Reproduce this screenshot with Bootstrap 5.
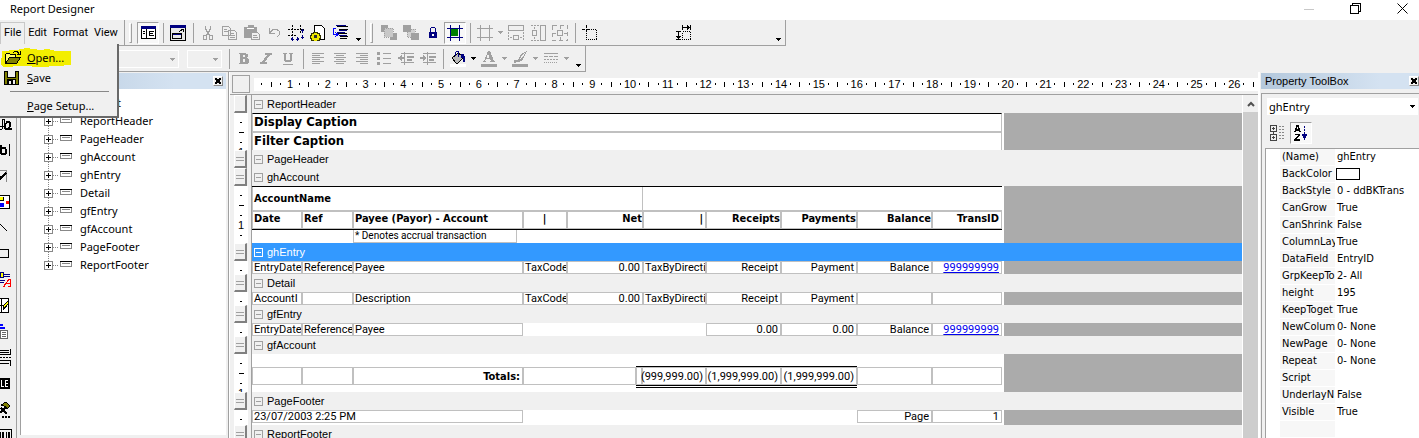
<!DOCTYPE html>
<html lang="en">
<head>
<meta charset="utf-8">
<meta name="viewport" content="width=device-width, initial-scale=1">
<title>Report Designer</title>
<link href="https://cdn.jsdelivr.net/npm/bootstrap@5.3.0/dist/css/bootstrap.min.css" rel="stylesheet">
<style>
  :root { --face:#f0f0f0; --line:#a0a0a0; --cell:#c0c0c0; }
  body { background:var(--face); color:#000; font:11px/16px "Noto Sans","Open Sans",sans-serif; overflow:hidden; }
  svg { display:block; flex:none; shape-rendering:crispEdges; }
  button { border:0; background:none; padding:0; color:inherit; }
  .titlebar { background:#fff; height:20px; padding:0 11px 2px 10px; }
  .winbtns { gap:36px; }
  .band { height:26px; padding-top:1px; border-right:1px solid var(--line); border-bottom:1px solid var(--line); }
  .menus { width:125px; font-family:Roboto,sans-serif; }
  .menus button { height:22px; padding:0 3px; }
  .menus .opened { border:1px solid #c8c8c8; border-bottom:0; }
  .grip { width:3px; height:20px; border:1px solid var(--line); border-left-color:#fff; border-top-color:#fff; margin:0 5px 0 4px; }
  .tool { width:22px; height:22px; display:flex; align-items:center; justify-content:center; flex:none; }
  .pressed { background:#f8f8f8; border:1px solid; border-color:var(--line) #fff #fff var(--line); }
  .apart { margin:0 76px 0 72px; }
  .split { width:8px; height:20px; background:linear-gradient(var(--line),var(--line)) 4px 0/1px 100% no-repeat; flex:none; }
  .caret { width:9px; height:22px; display:flex; align-items:center; justify-content:center; flex:none; }
  .low { align-items:flex-end; padding-bottom:3px; width:14px; }
  .tbselect { height:18px; border:1px solid #fff; background:transparent; appearance:none; border-radius:0; }
  .combo { position:relative; }
  .combo svg { position:absolute; right:4px; top:50%; margin-top:-1px; pointer-events:none; }
  .filemenu { position:absolute; left:0; top:44px; width:119px; height:74px; z-index:5; background:var(--face);
    border:solid #696969; border-width:0 2px 2px 0; padding-top:4px; }
  .filemenu button { display:flex; align-items:center; width:100%; height:20px; padding-left:4px; text-align:left; }
  .filemenu .ico { width:23px; }
  .marker { position:relative; }
  .marker .ink { position:absolute; left:1px; top:0; z-index:-1; }
  .filemenu hr { margin:3px 8px 4px 10px; border-color:#888; opacity:1; }
  .toolbox { width:17px; border-right:1px solid var(--line); padding-top:39px; overflow:hidden; }
  .toolbox button { width:12px; height:26px; display:flex; align-items:center; flex:none; }
  .dock { width:209px; margin-left:3px; border-right:1px solid var(--line); padding-right:2px; }
  .dockhead { height:16px; margin-top:1px; background:linear-gradient(90deg,#b4c8dc,#d4e2f1 75%); font:11px/16px "Liberation Sans",sans-serif; }
  .xbtn { width:10px; height:10px; margin:3px; background:var(--face); border:1px solid; border-color:#fff #888 #888 #fff; display:flex; align-items:center; justify-content:center; }
  .tree { background:#fff; border-left:1px solid var(--line); margin-bottom:3px; padding:5px 0 0 23px; flex:1; }
  .tree ul { list-style:none; margin:0; padding:0; }
  .node { display:flex; align-items:center; height:18px; }
  .node svg { margin-right:6px; }
  .surface { border-left:1px solid #fff; min-width:0; }
  .rulerrow { height:24px; border-bottom:1px solid var(--line); padding-top:3px; }
  .corner { width:18px; height:18px; border:1px solid var(--line); margin:0 4px 0 2px; flex:none; }
  .ruler { background:#fff; height:13px; margin-top:3px; padding-left:3px; display:grid; grid-template-columns:repeat(26,4fr) 2fr; font:11px/13px "Liberation Sans",sans-serif; }
  .unit { display:grid; grid-template-columns:repeat(4,1fr); place-items:center; min-width:0; }
  .unit.tail { grid-template-columns:repeat(2,1fr); }
  .unit span { width:0; display:flex; justify-content:center; }
  .dot { width:1px; height:2px; background:#000; }
  .bar { width:1px; height:5px; background:#000; }
  .row-s { display:flex; }
  .vr-s { width:22px; flex:none; padding-left:4px; border-right:1px solid var(--line); }
  .vruler { width:14px; height:100%; background:#fff; overflow:hidden; position:relative; font:11px/10px "Liberation Sans",sans-serif; }
  .vticks { position:absolute; inset:4px 0 auto 0; }
  .vticks i { display:flex; height:10px; align-items:center; justify-content:center; font-style:normal; }
  .vticks i::before { content:""; width:2px; height:1px; background:#000; }
  .vticks i:nth-child(4n+2)::before { width:5px; }
  .vticks i:nth-child(4n)::before { content:"1"; width:auto; height:auto; background:none; }
  .handle { width:13px; height:18px; border:solid; border-width:1px 2px 2px 1px; border-color:#fff #808080 #808080 #fff; background:var(--face); padding-top:6px; }
  .handle::before { content:""; display:block; margin:0 1px; height:4px; border:solid var(--line); border-width:1px 0; }
  .handle.first::before { display:none; }
  .caption-s { height:18px; flex:1; display:flex; align-items:center; gap:4px; padding-left:2px; font:11px/16px "Liberation Sans",sans-serif; }
  .sel { background:#3399ff; color:#fff; }
  .paper { width:752px; background:#fff; flex:none; font:11px/13px Roboto,sans-serif; }
  .void { background:#ababab; flex:1; }
  .cells { display:grid; width:750px; grid-template-columns:50px 51px 170px 44px 76px 63px 75px 76px 75px 70px; }
  .cells > * { border:1px solid var(--cell); padding:0 2px 0 1px; white-space:nowrap; overflow:hidden; min-width:0; line-height:12px; }
  .cells .none { border:0; }
  .line1 > * { height:13px; }
  .cells a { color:#0000ee; }
  .end { text-align:right; }
  .totals { grid-template-columns:50px 51px 170px 113px 6px 64px 75px 76px 75px 70px; }
  .totals > * { height:18px; line-height:17px; overflow:visible; }
  .totals .sum { position:relative; padding-left:0; }
  .sum::before { content:""; position:absolute; inset:-2px -1px auto; border-top:1px solid #000; }
  .sum::after { content:""; position:absolute; inset:auto -1px -4px; height:3px; border:solid #000; border-width:1px 0; }
  .strong-s, .big, .heads { font-family:"DejaVu Sans Condensed","DejaVu Sans",sans-serif; font-weight:700; }
  .big { width:750px; height:18px; border:solid var(--cell); border-width:0 1px 1px; font-size:13px; line-height:16px; padding-left:1px; }
  .heads > * { height:18px; line-height:14px; }
  .vscroll { width:16px; background:#cdcdcd; border-left:1px solid #fff; flex:none; }
  .vscroll button { width:100%; height:17px; background:var(--face); display:flex; align-items:center; justify-content:center; }
  .props { width:161px; flex:none; border-left:2px solid #fff; padding-left:1px; overflow:hidden; }
  .propbody { border:solid var(--line); border-width:1px 0 0 1px; margin-top:4px; padding:4px 0 0 3px; flex:1; }
  .objsel { width:151px; height:17px; border:0; background:#fff; appearance:none; padding:0 2px; margin-left:2px; line-height:17px; color:#000; border-radius:0; }
  .proptools { padding:7px 4px 4px; }
  .grid-s { background:#fff; border:solid var(--line); border-width:1px 0 0 1px; padding-left:14px; flex:1; overflow:hidden; }
  .grid-s table { border-collapse:collapse; table-layout:fixed; width:140px; font:11px/16px "DejaVu Sans Condensed","DejaVu Sans",sans-serif; }
  .grid-s th { font-weight:400; width:55px; background:#f7f7f7; padding:0 0 0 2px; height:17px; border-bottom:1px solid #fff; overflow:hidden; white-space:nowrap; }
  .grid-s td { padding:0 0 0 2px; white-space:nowrap; overflow:hidden; }
  .swatch { display:block; width:24px; height:12px; border:1px solid #000; margin-left:-1px; }
</style>
</head>
<body class="vh-100 d-flex flex-column">
<header class="titlebar d-flex align-items-center justify-content-between">
  <span>Report Designer</span>
  <div class="winbtns d-flex align-items-center">
    <button aria-label="Minimize"><svg width="10" height="10"><path d="M0 5.500h10" stroke="#c8c8c8"/></svg></button>
    <button aria-label="Restore"><svg width="11" height="11"><path d="M.5 2.500h8v8h-8zM2.500 2V.5h8v8H9" fill="none" stroke="#000"/></svg></button>
    <button aria-label="Close"><svg width="11" height="11" style="shape-rendering:auto"><path d="M.5.5l10 10M10.500.5l-10 10" stroke="#000"/></svg></button>
  </div>
</header>

<div class="d-flex">
  <nav class="band menus d-flex align-items-center">
    <button class="opened">File</button><button>Edit</button><button>Format</button><button>View</button>
  </nav>
  <div class="band d-flex align-items-center">
    <span class="grip"></span>
    <button class="tool pressed" aria-label="Explorer"><svg width="15" height="13"><path d="M.5.5h14v12H.5z" fill="#fff" stroke="#000"/><path d="M0 0h15v3H0z" fill="#000080"/><path d="M5.500 3v9M2 5.500h2M2 7.500h2M8 5.500h5M8 7.500h4M8 9.500h5M8.500 5v5" stroke="#000"/></svg></button>
    <span class="split"></span>
    <button class="tool" aria-label="Property box"><svg width="16" height="16"><path d="M.5.5h15v15H.5z" fill="#e8e8e8" stroke="#000"/><path d="M0 0h16v3H0zM2 8h10v2H2z" fill="#000080"/><path d="M2.500 8.500h9v5h-9z" fill="none" stroke="#000"/><path d="M9 7l4-3M11 4.500h3M13.500 4v3" stroke="#000"/></svg></button>
    <span class="split"></span>
    <button class="tool" aria-label="Cut"><svg width="12" height="16"><path d="M3.500 1v3l4 6M8.500 1v3l-4 6" fill="none" stroke="#a0a0a0" stroke-width="1.500"/><path d="M1.500 10.500h3v4h-3zM7.500 10.500h3v4h-3z" fill="none" stroke="#a0a0a0"/></svg></button>
    <button class="tool" aria-label="Copy"><svg width="16" height="14"><path d="M.5.5h6l2 2v7h-8zM6.500 4.500h6l2 2v7h-8z" fill="#f0f0f0" stroke="#a0a0a0"/><path d="M2 3.500h3M2 5.500h4M8 7.500h4M8 9.500h5M8 11.500h5" stroke="#a0a0a0"/></svg></button>
    <button class="tool" aria-label="Paste"><svg width="16" height="15"><path d="M0 2h4V0h6v2h3v11H0z" fill="#a0a0a0"/><path d="M3 3.500h7" stroke="#fff"/><path d="M7.500 7.500h6l2 2v5h-8z" fill="#f0f0f0" stroke="#a0a0a0"/><path d="M9 10.500h4M9 12.500h5" stroke="#a0a0a0"/></svg></button>
    <button class="tool" aria-label="Undo"><svg width="13" height="11"><path d="M1.500 1v5h5M2 5.500l3-3h4l2.500 2v3L9 10" fill="none" stroke="#a0a0a0"/></svg></button>
    <button class="tool" aria-label="Grid"><svg width="16" height="16"><path d="M4.500 0v11M12.500 0v8M0 4.500h16M0 10.500h8" stroke="#000" stroke-dasharray="2 1"/><path d="M3 14h8M14 5v8" stroke="#000080" stroke-dasharray="3 2"/><path d="M5 12v4h-1l-2-2 2-2zM9 12l2 2-2 2zM12 6h4l-2-2zM12 12h4l-2 2z" fill="#000080"/></svg></button>
    <button class="tool" aria-label="Page settings"><svg width="16" height="16"><path d="M4.500.5h7l3 3v11h-10z" fill="#fff" stroke="#000"/><path d="M14 3h1v12h-7v-1h6z" fill="#000"/><path d="M3 7h4v1h2v2h1v3H9v2H7v1H3v-1H1v-2H0v-3h1V8h2z" fill="#f0e800" stroke="#333300"/><path d="M4 10h3v3H4z" fill="#333"/></svg></button>
    <button class="tool" aria-label="Script order"><svg width="16" height="15"><path d="M4.500 1.500h11M6.500 4.500h9M4.500 8.500h10M7.500 11.500h8M7.500 13.500h7" stroke="#000"/><path d="M4 .5h10M7 5.500h8M5 7.500h8M7 10.500h8" stroke="#000080"/><path d="M4 3.500H1.500v6H5M3 7l3 2.500L3 12" fill="none" stroke="#0000ff"/></svg></button>
    <button class="caret low" aria-label="More"><svg width="5" height="3"><path d="M0 0h5v1H4v1H3v1H2V2H1V1H0z"/></svg></button>
  </div>
  <div class="band d-flex align-items-center">
    <span class="grip"></span>
    <button class="tool" aria-label="Bring to front"><svg width="16" height="15"><path d="M0 0h7v7H0zM9 8h7v7H9z" fill="#a0a0a0"/><path d="M3 3h9v9H3z" fill="#c8c8c8" stroke="#a0a0a0" stroke-dasharray="1 1"/></svg></button>
    <button class="tool" aria-label="Send to back"><svg width="16" height="15"><path d="M4 4h8v8H4z" fill="#d0d0d0" stroke="#a0a0a0" stroke-dasharray="1 1"/><path d="M0 0h8v7H0zM8 8h8v7H8z" fill="#a0a0a0"/></svg></button>
    <button class="tool" aria-label="Lock"><svg width="8" height="11"><path d="M1.500 5V2l1-1.500h3l1 1.500v3" fill="none" stroke="#000080"/><path d="M0 5h8v6H0z" fill="#000080"/><path d="M3 7h2v2H3z" fill="#fff"/></svg></button>
    <button class="tool pressed" aria-label="Snap to grid"><svg width="16" height="16"><path d="M4 4h7v7H4z" fill="#008000"/><path d="M3.500 0v16M12.500 0v16M0 3.500h16M0 12.500h16" stroke="#000080"/></svg></button>
    <span class="split"></span>
    <button class="tool" aria-label="Grid size"><svg width="16" height="16"><path d="M3.500 0v16M12.500 0v16M0 3.500h16M0 12.500h16" stroke="#a0a0a0"/></svg></button>
    <button class="caret" aria-label="Grid size options"><svg width="5" height="3"><path d="M0 0h5v1H4v1H3v1H2V2H1V1H0z" fill="#a0a0a0"/></svg></button>
    <button class="tool" aria-label="Same width"><svg width="16" height="16"><path d="M.5.5h15v5H.5zM5.500 10.500h5v4h-5z" fill="none" stroke="#a0a0a0"/><path d="M.5 7v8M15.500 7v8M2 12.500h2M12 12.500h2" stroke="#a0a0a0" stroke-dasharray="2 1"/></svg></button>
    <button class="tool" aria-label="Same height"><svg width="15" height="16"><path d="M9.500.5h5v15h-5zM1.500 5.500h4v5h-4z" fill="none" stroke="#a0a0a0"/><path d="M0 .5h8M0 15.500h8M3.500 2v2M3.500 12v2" stroke="#a0a0a0" stroke-dasharray="2 1"/></svg></button>
    <button class="tool" aria-label="Same size"><svg width="16" height="16"><path d="M5.500 5.500h5v5h-5z" fill="none" stroke="#a0a0a0"/><path d="M.5.5h15v15H.5z" fill="none" stroke="#a0a0a0" stroke-dasharray="4 3"/><path d="M8.500 1v3M8.500 12v3M1 8.500h3M12 8.500h3" stroke="#a0a0a0"/></svg></button>
    <span class="split"></span>
    <button class="tool" aria-label="Place control"><svg width="16" height="16"><path d="M4.500 0v8M0 4.500h8" stroke="#000" stroke-dasharray="3 1"/><path d="M4.500 4.500h10v10h-10z" fill="none" stroke="#000" stroke-dasharray="1 1"/></svg></button>
    <button class="tool apart" aria-label="Resize control"><svg width="16" height="16"><path d="M6.500 6.500h8v8h-8z" fill="none" stroke="#000" stroke-dasharray="1 1"/><path d="M6.500 0v5M14.500 0v5M7 2.500h7M11 .5l2 2-2 2M0 6.500h5M0 14.500h5M2.500 7v7M.5 11l2 2 2-2" fill="none" stroke="#000"/></svg></button>
    <button class="caret low" aria-label="More"><svg width="5" height="3"><path d="M0 0h5v1H4v1H3v1H2V2H1V1H0z"/></svg></button>
  </div>
</div>

<div class="d-flex">
  <div class="band d-flex align-items-center">
    <span class="combo"><select class="tbselect" style="width:179px" aria-label="Font" disabled></select><svg width="6" height="3"><path d="M0 0h6L3 3z" fill="#a0a0a0"/></svg></span>
    <span class="combo ms-2"><select class="tbselect" style="width:35px" aria-label="Size" disabled></select><svg width="6" height="3"><path d="M0 0h6L3 3z" fill="#a0a0a0"/></svg></span>
    <span class="split" style="margin-left:3px"></span>
    <button class="tool" aria-label="Bold"><svg width="10" height="11"><path d="M0 0h7v1h2v3H8v1h1v1h1v4H9v1H0v-1h1V1H0zM4 2v2h2V2zM4 6v3h2V6z" fill="#a0a0a0" fill-rule="evenodd"/></svg></button>
    <button class="tool" aria-label="Italic"><svg width="12" height="11"><path d="M5 0h7v2h-2L5 9h2v2H0V9h2l5-7H5z" fill="#a0a0a0"/></svg></button>
    <button class="tool" aria-label="Underline"><svg width="10" height="12"><path d="M0 0h4v1H3v6h4V1H6V0h4v1H9v7H8v1H2V8H1V1H0zM0 11h10v1H0z" fill="#a0a0a0"/></svg></button>
    <span class="split"></span>
    <button class="tool" aria-label="Align left"><svg width="12" height="12"><path d="M0 .5h12M0 2.500h8M0 4.500h12M0 6.500h8M0 8.500h12M0 10.500h8" stroke="#a0a0a0"/></svg></button>
    <button class="tool" aria-label="Align center"><svg width="12" height="12"><path d="M0 .5h12M2 2.500h8M0 4.500h12M2 6.500h8M0 8.500h12M2 10.500h8" stroke="#a0a0a0"/></svg></button>
    <button class="tool" aria-label="Align right"><svg width="12" height="12"><path d="M0 .5h12M4 2.500h8M0 4.500h12M4 6.500h8M0 8.500h12M4 10.500h8" stroke="#a0a0a0"/></svg></button>
    <button class="tool" aria-label="Bullets"><svg width="14" height="13"><path d="M0 0h3v3H0zM0 5h3v3H0zM0 10h3v3H0zM6 1h8v1H6zM6 6h8v1H6zM6 11h8v1H6z" fill="#a0a0a0"/></svg></button>
    <button class="tool" aria-label="Outdent"><svg width="16" height="13"><path d="M3 1h13v1H3zM9 4h7v2H9zM9 7h5v2H9zM3 10h13v1H3zM6 0h1v13H6zM0 5h6v2H0zM2 4h1v4H2zM3 3h1v6H3z" fill="#a0a0a0"/></svg></button>
    <button class="tool" aria-label="Indent"><svg width="16" height="13"><path d="M3 1h13v1H3zM9 4h7v2H9zM9 7h5v2H9zM3 10h13v1H3zM7 0h1v13H7zM0 5h6v2H0zM4 4h1v4H4zM3 3h1v6H3z" fill="#a0a0a0"/></svg></button>
    <span class="split"></span>
    <button class="tool" aria-label="Fill color"><svg width="16" height="16"><path d="M0 13h16v3H0z" fill="#fff"/><path d="M2 7l6-5 6 4-6 6H6z" fill="#b8b8b8" stroke="#000"/><path d="M5.500 5V1.500l1-1h2V6" fill="none" stroke="#000080"/><path d="M11 3h3v2h1v6h-2V7h-2z" fill="#000080"/></svg></button>
    <button class="caret" aria-label="Fill options"><svg width="5" height="3"><path d="M0 0h5v1H4v1H3v1H2V2H1V1H0z"/></svg></button>
    <button class="tool" aria-label="Text color"><svg width="16" height="16"><path d="M0 13h16v3H0z" fill="#a0a0a0"/><path d="M7 0h2l4 10h1v1H9v-1h1L9 8H5l-1 2h1v1H2v-1h1zM7 3L5.500 7h3z" fill="#a0a0a0" fill-rule="evenodd"/></svg></button>
    <button class="caret" aria-label="Text color options"><svg width="5" height="3"><path d="M0 0h5v1H4v1H3v1H2V2H1V1H0z" fill="#a0a0a0"/></svg></button>
    <button class="tool" aria-label="Line color"><svg width="16" height="16"><path d="M0 13h16v3H0zM15 0l-5 10-5 1-3 1v-3h4l3-6z" fill="#a0a0a0"/><path d="M8 8l5-6" stroke="#f0f0f0"/></svg></button>
    <button class="caret" aria-label="Line color options"><svg width="5" height="3"><path d="M0 0h5v1H4v1H3v1H2V2H1V1H0z" fill="#a0a0a0"/></svg></button>
    <button class="tool" aria-label="Line style"><svg width="14" height="12"><path d="M0 .5h14" stroke="#a0a0a0"/><path d="M0 3.500h14" stroke="#a0a0a0" stroke-dasharray="4 1"/><path d="M0 6.500h14" stroke="#a0a0a0" stroke-dasharray="2 1"/><path d="M0 9.500h14" stroke="#a0a0a0" stroke-dasharray="1 1"/></svg></button>
    <button class="caret" aria-label="Line style options"><svg width="5" height="3"><path d="M0 0h5v1H4v1H3v1H2V2H1V1H0z" fill="#a0a0a0"/></svg></button>
    <button class="caret low" aria-label="More"><svg width="5" height="3"><path d="M0 0h5v1H4v1H3v1H2V2H1V1H0z"/></svg></button>
  </div>
</div>

<div class="filemenu">
  <div class="marker">
    <svg class="ink" width="72" height="20"><path d="M1 3l14-1 10-2 14 2 8-1 8 2h15v14l-15 1-14 1-20-1-19 1-2-2z" fill="#f3ee00"/></svg>
    <button><span class="ico"><svg width="17" height="14"><path d="M1.500 12.500v-9l1-1h3l1 1h5v3" fill="#ffff66" stroke="#000"/><path d="M1.500 12.500l4-6h11l-4 6z" fill="#808000" stroke="#000"/><path d="M9 2l2-1.500h2l2 2M13 3h3V0" fill="none" stroke="#000"/></svg></span><span><u>O</u>pen...</span></button>
  </div>
  <button><span class="ico"><svg width="15" height="14"><path d="M0 0h15v14H0z"/><path d="M1 1h2v12H1zM12 1h2v12h-2zM3 7h9v1H3z" fill="#808000"/><path d="M4 0h7v6H4z" fill="#f0f0f0"/><path d="M5 10h2v3H5zM9 9h2v4H9z" fill="#f0f0f0"/></svg></span><span><u>S</u>ave</span></button>
  <hr>
  <button><span class="ico"></span><span><u>P</u>age Setup...</span></button>
</div>

<main class="d-flex flex-fill" style="min-height:0">
  <aside class="toolbox d-flex flex-column">
    <button aria-label="Label"><svg width="12" height="12"><path d="M0 8h4M0 11h2M2 11V1h2v10" stroke="#000" fill="none"/><path d="M10 4H7L5 7v3l1 1h2l2-3 .5-4L9 10l1 1h2" stroke="#000" stroke-width="1.500" fill="none"/></svg></button>
    <button aria-label="Text box"><svg width="12" height="12"><path d="M1 1v9M1 4h4l1 2v3l-1 1H1" stroke="#000" stroke-width="2" fill="none"/><path d="M9.500 0v12" stroke="#000"/></svg></button>
    <button aria-label="Check box"><svg width="8" height="12"><path d="M0 .5h7M6.500 0v12" stroke="#888"/><path d="M0 6v3l6-6" stroke="#000" stroke-width="2" fill="none"/></svg></button>
    <button aria-label="Image"><svg width="10" height="14"><path d="M-1 .5H9.500v13H-1" fill="#fff" stroke="#000"/><path d="M0 2h3v3H0z" fill="#ff0"/><path d="M0 5.500h3.500V2" fill="none" stroke="#000"/><path d="M0 8h4v4H0z" fill="#00f"/><path d="M6 6h3v3H6z" fill="#f00"/></svg></button>
    <button aria-label="Line"><svg width="8" height="9"><path d="M0 1l7 7" stroke="#000"/></svg></button>
    <button aria-label="Shape"><svg width="9" height="9"><path d="M-1 .5H8.500v8H-1" fill="none" stroke="#000"/></svg></button>
    <button aria-label="Rich text"><svg width="12" height="15"><path d="M0 0h3v5H0z" fill="#ff0" stroke="#000080"/><path d="M4 2.500h6M4 4.500h6M0 8.500h5M0 10.500h4" stroke="#000080"/><path d="M4 14L9 7h1v7M5 11.500h5M3 14h2M8 14h3" stroke="#f00" fill="none"/></svg></button>
    <button aria-label="Frame"><svg width="9" height="15"><path d="M-1 .5H8.500v14H-1M1.500 0v15M0 7.500h3" fill="#fff" stroke="#000"/><path d="M3 12l1-5 4-4v3z" fill="#ff0" stroke="#000"/></svg></button>
    <button aria-label="Subreport"><svg width="9" height="15"><path d="M0 0h3v2H0zM0 3h5v2H0z" fill="#00f"/><path d="M.5 6.500h7v8h-7z" fill="#fff" stroke="#666"/><path d="M2 8.500h4M2 10.500h4M2 12.500h4" stroke="#666"/></svg></button>
    <button aria-label="Page break"><svg width="11" height="17"><path d="M0 1.500h9M0 3.500h9M0 5.500h10.500V0M0 11.500h10.500v5M0 14.500h9" fill="none" stroke="#000"/><path d="M0 8.500h11" stroke="#000" stroke-dasharray="2 1"/></svg></button>
    <button aria-label="OLE object"><svg width="10" height="11"><path d="M0 0h10v11H0z"/><path d="M1.500 2v6.500H4M8 2.500H5.500v6H8M5.500 5.500H8" stroke="#fff" fill="none"/></svg></button>
    <button aria-label="ActiveX"><svg width="11" height="16"><path d="M1 3l5-3 4 4-3 3-3-3z" fill="#808000" stroke="#000"/><path d="M6 5l-6 6M1 6l6 6" stroke="#000" stroke-width="1.500"/><path d="M2 14.500h9" stroke="#000" stroke-width="2" stroke-dasharray="2 1"/></svg></button>
    <button aria-label="Bar code"><svg width="12" height="14"><path d="M0 .5h11.500V14M.5 3v11M3 3v11M6.500 3v11M9 3v11" fill="none" stroke="#000" stroke-width="1.500"/></svg></button>
  </aside>

  <aside class="dock d-flex flex-column">
    <div class="dockhead d-flex justify-content-end"><button class="xbtn" aria-label="Close explorer"><svg width="6" height="6"><path d="M0 0l6 6M6 0L0 6" stroke="#000" stroke-width="1.500"/></svg></button></div>
    <div class="tree">
      <ul id="tree"><li class="node"><svg width="14" height="18"><path d="M1 5h12v6H1z" fill="#888"/></svg><span>rptAccount</span></li></ul>
    </div>
  </aside>

  <section class="surface d-flex flex-column flex-fill">
    <div class="rulerrow d-flex"><span class="corner"></span><div class="ruler flex-fill" id="ruler"></div></div>
    <div class="d-flex flex-fill" style="min-height:0">
      <div class="flex-fill overflow-hidden" id="sections">
        <div class="row-s" data-cap="ReportHeader"></div>
        <div class="row-s" data-body>
          <div class="paper"><div class="big" style="height:19px;border-top:1px solid #000">Display Caption</div><div class="big" style="border-top:1px solid #c0c0c0;border-bottom:0">Filter Caption</div></div>
        </div>
        <div class="row-s" data-cap="PageHeader"></div>
        <div class="row-s" data-cap="ghAccount"></div>
        <div class="row-s" data-body>
          <div class="paper" style="height:57px">
            <div class="cells" style="grid-template-columns:391px 359px;border-top:1px solid #000"><b class="strong-s" style="height:24px;line-height:24px;border-top:0">AccountName</b><span class="none" style="border-bottom:1px solid #c0c0c0"></span></div>
            <div class="cells heads" style="border-bottom:1px solid #000"><span>Date</span><span>Ref</span><span>Payee (Payor) - Account</span><span class="text-center">|</span><span class="end px-0">Net</span><span class="end">|</span><span class="end px-0">Receipts</span><span class="end px-0">Payments</span><span class="end px-0">Balance</span><span class="end">TransID</span></div>
            <div class="cells" style="grid-template-columns:101px 164px"><span class="none"></span><span style="height:13px;font-size:10px;border-top:0">* Denotes accrual transaction</span></div>
          </div>
        </div>
        <div class="row-s" data-cap="ghEntry" data-sel></div>
        <div class="row-s" data-body><div class="paper"><div class="cells line1"><span>EntryDate</span><span>Reference</span><span>Payee</span><span>TaxCode</span><span class="end">0.00</span><span>TaxByDirecti</span><span class="end">Receipt</span><span class="end">Payment</span><span class="end">Balance</span><span class="end"><a href="#">999999999</a></span></div></div></div>
        <div class="row-s" data-cap="Detail"></div>
        <div class="row-s" data-body><div class="paper"><div class="cells line1"><span>AccountI</span><span></span><span>Description</span><span>TaxCode</span><span class="end">0.00</span><span>TaxByDirecti</span><span class="end">Receipt</span><span class="end">Payment</span><span></span><span></span></div></div></div>
        <div class="row-s" data-cap="gfEntry"></div>
        <div class="row-s" data-body><div class="paper"><div class="cells line1"><span>EntryDate</span><span>Reference</span><span>Payee</span><span class="none"></span><span class="none"></span><span class="none"></span><span class="end">0.00</span><span class="end">0.00</span><span class="end">Balance</span><span class="end"><a href="#">999999999</a></span></div></div></div>
        <div class="row-s" data-cap="gfAccount"></div>
        <div class="row-s" data-body><div class="paper" style="height:38px;padding-top:13px"><div class="cells totals"><span></span><span></span><b class="end strong-s">Totals:</b><span></span><span class="sum"></span><span class="sum end d-flex justify-content-end">(999,999.00)</span><span class="sum end">(1,999,999.00)</span><span class="sum end">(1,999,999.00)</span><span></span><span></span></div></div></div>
        <div class="row-s" data-cap="PageFooter"></div>
        <div class="row-s" data-body><div class="paper" style="height:15px"><div class="cells line1" style="grid-template-columns:271px 334px 75px 70px"><span>23/07/2003 2:25 PM</span><span class="none"></span><span class="end">Page</span><span class="end">1</span></div></div></div>
        <div class="row-s" data-cap="ReportFooter"></div>
      </div>
      <div class="vscroll"><button aria-label="Scroll up"><svg width="8" height="6" style="shape-rendering:auto"><path d="M1 5l3-3 3 3" fill="none" stroke="#505050" stroke-width="2"/></svg></button></div>
    </div>
  </section>

  <aside class="props d-flex flex-column">
    <div class="dockhead d-flex justify-content-between text-nowrap"><span class="ps-1">Property ToolBox</span><button class="xbtn me-0" aria-label="Close properties"><svg width="6" height="6"><path d="M0 0l6 6M6 0L0 6" stroke="#000" stroke-width="1.500"/></svg></button></div>
    <div class="propbody d-flex flex-column">
      <span class="combo d-block"><select class="objsel" aria-label="Object"><option>ghEntry</option></select><svg width="5" height="3"><path d="M0 0h5v1H4v1H3v1H2V2H1V1H0z"/></svg></span>
      <div class="proptools d-flex align-items-center gap-1">
        <button class="tool" style="width:17px" aria-label="Categorized"><svg width="15" height="16"><path d="M.5.5h6v6h-6zM.5 9.500h6v6h-6zM3.500 7v2M2 3.500h3M3.500 2v3M2 12.500h3M3.500 11v3" fill="none" stroke="#444"/><path d="M9 1.500h5M9 4.500h6M9 7.500h6M9 10.500h6M9 13.500h6" stroke="#888" stroke-dasharray="2 1"/></svg></button>
        <button class="tool pressed" aria-label="Alphabetic"><svg width="14" height="16"><path d="M1 7l2-6h1l2 6M2 5h4M1 9.500h4.500L1 15h5" fill="none" stroke="#000" stroke-width="1.500"/><path d="M10.500 1v9" stroke="#000080" stroke-dasharray="2 1"/><path d="M8 9h5v2h-1v2h-1v2h-1v-2H9v-2H8z" fill="#000080"/></svg></button>
      </div>
      <div class="grid-s"><table><tbody id="props"></tbody></table></div>
    </div>
  </aside>
</main>

<script src="https://cdn.jsdelivr.net/npm/bootstrap@5.3.0/dist/js/bootstrap.bundle.min.js"></script>
<script>
  // Report structure tree
  const names = ['ReportHeader','PageHeader','ghAccount','ghEntry','Detail','gfEntry','gfAccount','PageFooter','ReportFooter'];
  names.forEach((n, i) => tree.insertAdjacentHTML('beforeend',
    `<li class="node"><svg width="30" height="18"><path d="M4.500 0v${i < names.length - 1 ? 18 : 9}M9 9.500h6" stroke="#888" stroke-dasharray="1 1"/><path d="M.5 5.500h8v8h-8z" fill="#fff" stroke="#888"/><path d="M2 9.500h5M4.500 7v5" stroke="#000"/><path d="M16 5h12v6H16z" fill="#888"/><path d="M16 5.500h12" stroke="#000"/><path d="M17 6h10v4H17z" fill="#fff"/><path d="M18 7.500h8" stroke="#888"/></svg><span>${n}</span></li>`));

  // Horizontal ruler, one cell per centimetre
  let r = '';
  for (let i = 1; i <= 26; i++) r += `<div class="unit"><i class="dot"></i><i class="bar"></i><i class="dot"></i><span>${i}</span></div>`;
  document.getElementById('ruler').innerHTML = r + '<div class="unit tail"><i class="dot"></i><i class="bar"></i></div>';

  // Section captions and the vertical ruler beside each section
  document.querySelectorAll('[data-cap]').forEach((el, i) => {
    const c = 'sel' in el.dataset ? '#fff' : '#a0a0a0';
    el.innerHTML = `<div class="vr-s"><div class="handle${i ? '' : ' first'}"></div></div><div class="caption-s${c === '#fff' ? ' sel' : ''}"><svg width="9" height="9"><path d="M.5.5h8v8h-8zM2 4.500h5" fill="none" stroke="${c}"/></svg><span>${el.dataset.cap}</span></div>`;
  });
  document.querySelectorAll('[data-body]').forEach(el => {
    el.insertAdjacentHTML('afterbegin', '<div class="vr-s"><div class="vruler"><div class="vticks"><i></i><i></i><i></i><i></i><i></i><i></i></div></div></div>');
    el.insertAdjacentHTML('beforeend', '<div class="void"></div>');
  });

  // Property grid
  [['(Name)','ghEntry'],['BackColor','<span class="swatch"></span>'],['BackStyle','0 - ddBKTrans'],['CanGrow','True'],['CanShrink','False'],['ColumnLay','True'],['DataField','EntryID'],['GrpKeepTo','2- All'],['height','195'],['KeepToget','True'],['NewColum','0- None'],['NewPage','0- None'],['Repeat','0- None'],['Script',''],['UnderlayN','False'],['Visible','True'],['','']]
    .forEach(([k, v]) => props.insertAdjacentHTML('beforeend', `<tr><th scope="row">${k}</th><td>${v}</td></tr>`));
</script>
</body>
</html>
